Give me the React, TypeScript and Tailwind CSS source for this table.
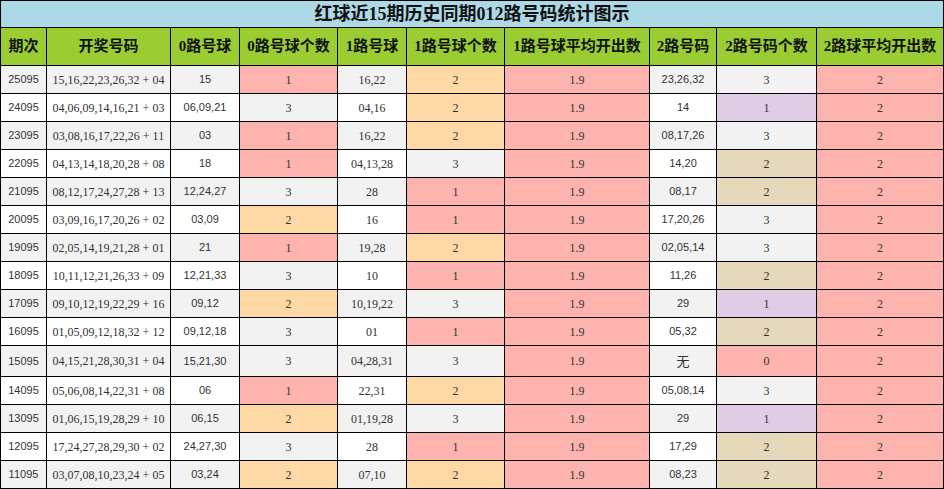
import React from 'react';

type Row = {
  qi: string;
  kj: string;
  r0: string;
  c0: number;
  r1: string;
  c1: number;
  r2: string;
  c2: number;
};

const rows: Row[] = [
  { qi: '25095', kj: '15,16,22,23,26,32 + 04', r0: '15', c0: 1, r1: '16,22', c1: 2, r2: '23,26,32', c2: 3 },
  { qi: '24095', kj: '04,06,09,14,16,21 + 03', r0: '06,09,21', c0: 3, r1: '04,16', c1: 2, r2: '14', c2: 1 },
  { qi: '23095', kj: '03,08,16,17,22,26 + 11', r0: '03', c0: 1, r1: '16,22', c1: 2, r2: '08,17,26', c2: 3 },
  { qi: '22095', kj: '04,13,14,18,20,28 + 08', r0: '18', c0: 1, r1: '04,13,28', c1: 3, r2: '14,20', c2: 2 },
  { qi: '21095', kj: '08,12,17,24,27,28 + 13', r0: '12,24,27', c0: 3, r1: '28', c1: 1, r2: '08,17', c2: 2 },
  { qi: '20095', kj: '03,09,16,17,20,26 + 02', r0: '03,09', c0: 2, r1: '16', c1: 1, r2: '17,20,26', c2: 3 },
  { qi: '19095', kj: '02,05,14,19,21,28 + 01', r0: '21', c0: 1, r1: '19,28', c1: 2, r2: '02,05,14', c2: 3 },
  { qi: '18095', kj: '10,11,12,21,26,33 + 09', r0: '12,21,33', c0: 3, r1: '10', c1: 1, r2: '11,26', c2: 2 },
  { qi: '17095', kj: '09,10,12,19,22,29 + 16', r0: '09,12', c0: 2, r1: '10,19,22', c1: 3, r2: '29', c2: 1 },
  { qi: '16095', kj: '01,05,09,12,18,32 + 12', r0: '09,12,18', c0: 3, r1: '01', c1: 1, r2: '05,32', c2: 2 },
  { qi: '15095', kj: '04,15,21,28,30,31 + 04', r0: '15,21,30', c0: 3, r1: '04,28,31', c1: 3, r2: '无', c2: 0 },
  { qi: '14095', kj: '05,06,08,14,22,31 + 08', r0: '06', c0: 1, r1: '22,31', c1: 2, r2: '05,08,14', c2: 3 },
  { qi: '13095', kj: '01,06,15,19,28,29 + 10', r0: '06,15', c0: 2, r1: '01,19,28', c1: 3, r2: '29', c2: 1 },
  { qi: '12095', kj: '17,24,27,28,29,30 + 02', r0: '24,27,30', c0: 3, r1: '28', c1: 1, r2: '17,29', c2: 2 },
  { qi: '11095', kj: '03,07,08,10,23,24 + 05', r0: '03,24', c0: 2, r1: '07,10', c1: 2, r2: '08,23', c2: 2 },
];

const headers = [
  { label: '期次', w: 'w-[46px]' },
  { label: '开奖号码', w: 'w-[124px]' },
  { label: '0路号球', w: 'w-[69px]' },
  { label: '0路号球个数', w: 'w-[98px]' },
  { label: '1路号球', w: 'w-[69px]' },
  { label: '1路号球个数', w: 'w-[98px]' },
  { label: '1路号球平均开出数', w: 'w-[145px]' },
  { label: '2路号码', w: 'w-[67px]' },
  { label: '2路号码个数', w: 'w-[100px]' },
  { label: '2路球平均开出数', w: 'w-[127px]' },
];

const serif = "font-['Liberation_Serif','Noto_Sans_CJK_SC',serif] text-[12px]";
const sans = "font-['Liberation_Sans','Noto_Sans_CJK_SC',sans-serif] text-[11px]";

// 0路 / 1路 count colours
const countBg = (n: number) => {
  if (n === 1) return 'bg-[#fdb3ae]';
  if (n === 2) return 'bg-[#fed9a5]';
  return 'bg-[#f2f2f2]';
};

// 2路 count colours
const count2Bg = (n: number) => {
  if (n === 0) return 'bg-[#fdb3ae]';
  if (n === 1) return 'bg-[#e0cce5]';
  if (n === 2) return 'bg-[#e6d8bb]';
  return 'bg-[#f2f2f2]';
};

const Cell: React.FC<{ w: string; className?: string; children: React.ReactNode }> = ({ w, className = '', children }) => (
  <div className={`${w} shrink-0 flex items-center justify-center border-r border-b border-black text-[#333] ${className}`}>
    {children}
  </div>
);

export default function App() {
  return (
    <div className="w-[944px] h-[489px] bg-white overflow-hidden">
      <div className="border-l border-t border-black w-[944px]">
        {/* Title */}
        <div className="h-[27px] bg-[#add8e6] border-r border-b border-black flex items-center justify-center font-['Liberation_Serif','Noto_Sans_CJK_SC',serif] font-bold text-[18px] text-[#111] leading-none">
          红球近15期历史同期012路号码统计图示
        </div>

        {/* Header */}
        <div className="flex h-[38px]">
          {headers.map((h) => (
            <div
              key={h.label}
              className={`${h.w} shrink-0 flex items-center justify-center border-r border-b border-black bg-[#9acd32] font-['Liberation_Serif','Noto_Sans_CJK_SC',serif] font-bold text-[15px] text-[#111] whitespace-nowrap`}
            >
              {h.label}
            </div>
          ))}
        </div>

        {/* Data rows */}
        {rows.map((r, i) => {
          const rowBg = i % 2 === 0 ? 'bg-[#f2f2f2]' : 'bg-white';
          const tall = r.r2 === '无';
          return (
            <div key={r.qi} className={`flex ${tall ? 'h-[31px]' : 'h-[28px]'}`}>
              <Cell w="w-[46px]" className={`${rowBg} ${sans}`}>{r.qi}</Cell>
              <Cell w="w-[124px]" className={`${rowBg} ${serif}`}>{r.kj}</Cell>
              <Cell w="w-[69px]" className={`${rowBg} ${sans}`}>{r.r0}</Cell>
              <Cell w="w-[98px]" className={`${countBg(r.c0)} ${serif}`}>{r.c0}</Cell>
              <Cell w="w-[69px]" className={`${rowBg} ${serif}`}>{r.r1}</Cell>
              <Cell w="w-[98px]" className={`${countBg(r.c1)} ${serif}`}>{r.c1}</Cell>
              <Cell w="w-[145px]" className={`bg-[#fdb3ae] ${serif}`}>1.9</Cell>
              <Cell w="w-[67px]" className={`${rowBg} ${tall ? "font-['Noto_Sans_CJK_SC',sans-serif] text-[13px]" : sans}`}>{r.r2}</Cell>
              <Cell w="w-[100px]" className={`${count2Bg(r.c2)} ${serif}`}>{r.c2}</Cell>
              <Cell w="w-[127px]" className={`bg-[#fdb3ae] ${serif}`}>2</Cell>
            </div>
          );
        })}
      </div>
    </div>
  );
}
